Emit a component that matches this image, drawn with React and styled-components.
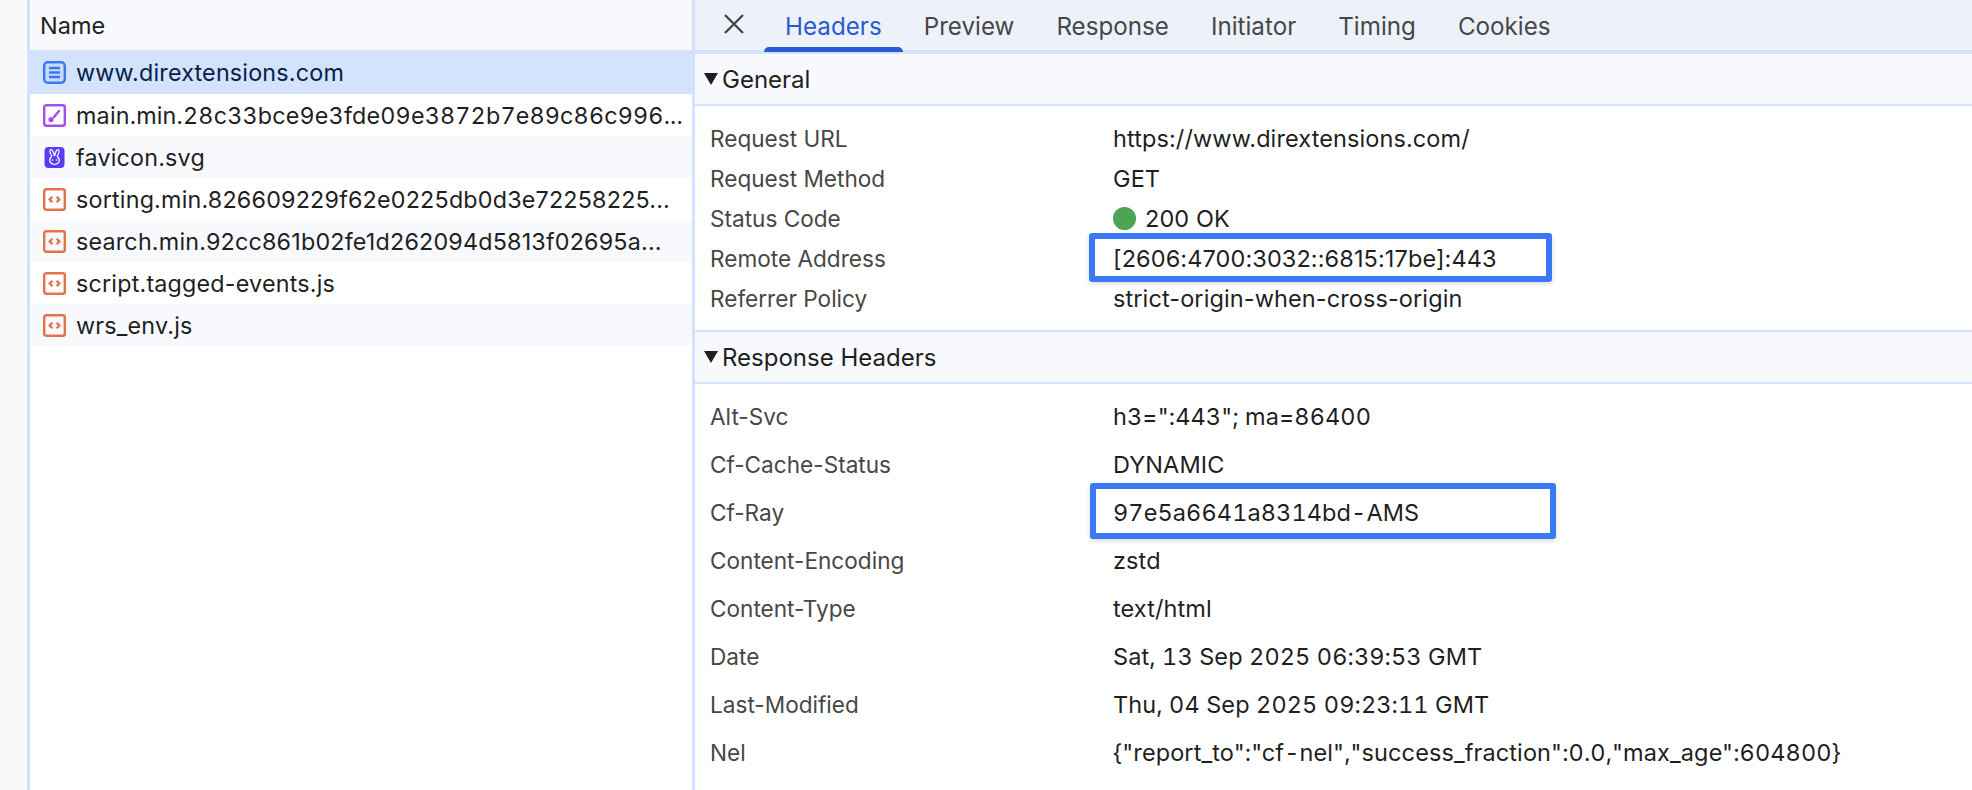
import React from 'react';
import styled, { createGlobalStyle } from 'styled-components';

const GlobalStyle = createGlobalStyle`
    html, body {
        margin: 0;
        padding: 0;
        background: #fff;
        overflow: hidden;
    }
    body {
        font-family: Inter, "Liberation Sans", sans-serif;
        -webkit-font-smoothing: antialiased;
    }
`;

const Page = styled.div`
    display: flex;
    width: 1972px;
    height: 790px;
    overflow: hidden;
`;

const Gutter = styled.div`
    width: 27px;
    flex: none;
    background: #f9f9fb;
    border-right: 3px solid #d3e3fd;
`;

const NamePanel = styled.div`
    width: 662px;
    flex: none;
`;

const NameHeader = styled.div`
    height: 50px;
    display: flex;
    align-items: center;
    padding-left: 8px;
    margin-left: 2px;
    background: #f8f9fd;
    font-size: 23.5px;
    color: #1f1f1f;
`;

const FileRow = styled.div`
    height: ${p => (p.$selected ? 44 : 42)}px;
    display: flex;
    align-items: center;
    padding-left: 13px;
    gap: 10px;
    font-size: 23.3px;
    letter-spacing: 0.2px;
    font-variant-numeric: ${p => (p.$tabular ? 'tabular-nums' : 'normal')};
    white-space: nowrap;
    background: ${p => (p.$selected ? '#d3e3fd' : p.$alt ? '#f8f9fd' : '#fff')};
    color: ${p => (p.$selected ? '#041e49' : '#1f1f1f')};
`;

const Details = styled.div`
    flex: 1;
    min-width: 0;
    border-left: 3px solid #d3e3fd;
`;

const TabBar = styled.div`
    height: 50px;
    display: flex;
    align-items: center;
    background: #edf2fa;
    border-bottom: 4px solid #d3e3fd;
`;

const CloseButton = styled.div`
    width: 69px;
    display: flex;
    justify-content: flex-end;
    padding-right: 20px;
    box-sizing: border-box;
    margin-top: -2px;
`;

const Tab = styled.div`
    position: relative;
    height: 50px;
    display: flex;
    align-items: center;
    padding: 2px 21px 0;
    box-sizing: border-box;
    font-size: 24.2px;
    color: ${p => (p.$active ? '#2a5bd0' : '#474747')};
    ${p => p.$active && `
        &::after {
            content: '';
            position: absolute;
            left: 0;
            right: 0;
            bottom: -2px;
            height: 5px;
            border-radius: 5px 5px 0 0;
            background: #2a5bd0;
        }
    `}
`;

const SectionHeader = styled.div`
    height: 50px;
    display: flex;
    align-items: center;
    gap: 4px;
    padding-left: 9px;
    background: #f8f9fd;
    border-bottom: 2px solid #d3e3fd;
    font-size: 24px;
    color: #1f1f1f;
`;

const Caret = styled.span`
    width: 0;
    height: 0;
    border-left: 7px solid transparent;
    border-right: 7px solid transparent;
    border-top: 12px solid #1f1f1f;
`;

const GeneralList = styled.div`
    height: 226px;
    padding-top: 12px;
    box-sizing: border-box;
    border-bottom: 2px solid #d3e3fd;
`;

const ResponseList = styled.div`
    padding-top: 8px;
`;

const HeaderRow = styled.div`
    display: grid;
    grid-template-columns: 403px 1fr;
    align-items: center;
    height: ${p => p.$h}px;
    padding-left: 15px;
`;

const HeaderName = styled.div`
    color: #474747;
    font-size: 22.6px;
`;

const HeaderValue = styled.div`
    position: relative;
    display: flex;
    align-items: center;
    gap: 9px;
    height: 28px;
    color: #1f1f1f;
    white-space: nowrap;
    font-size: 23.5px;
    letter-spacing: 0.1px;
    font-variant-numeric: ${p => (p.$tabular ? 'tabular-nums' : 'normal')};
`;

const StatusDot = styled.span`
    width: 23px;
    height: 23px;
    border-radius: 50%;
    background: #4ea354;
`;

// blue annotation boxes drawn over the screenshot
const Callout = styled.div`
    position: absolute;
    left: ${p => p.$left}px;
    top: ${p => p.$top}px;
    width: ${p => p.$w}px;
    height: ${p => p.$h}px;
    box-sizing: border-box;
    border: 6px solid #3b78f5;
    border-radius: 3px;
    box-shadow: 0 2px 5px rgba(0, 0, 0, 0.15);
`;

function DocIcon() {
    return (
        <svg width="23" height="23" viewBox="0 0 23 23">
            <rect x="1.200" y="1.200" width="20.600" height="20.600" rx="3.500" fill="#c9dbfb" stroke="#3b78f0" strokeWidth="2.400" />
            <path d="M6 7h11M6 11.500h11M6 16h11" stroke="#3b78f0" strokeWidth="2.400" />
        </svg>
    );
}

function StyleIcon() {
    return (
        <svg width="23" height="23" viewBox="0 0 23 23">
            <rect x="1.200" y="1.200" width="20.600" height="20.600" rx="2" fill="none" stroke="#a350e8" strokeWidth="2.400" />
            <path d="M11 13L16 7" stroke="#a350e8" strokeWidth="2.400" strokeLinecap="round" />
            <circle cx="8" cy="15.600" r="2.600" fill="#a350e8" />
        </svg>
    );
}

function RabbitIcon() {
    return (
        <svg width="23" height="23" viewBox="0 0 23 23">
            <rect x="1.500" y="1" width="20" height="21" rx="4" fill="#5b3df0" />
            <path d="M9 10.500C6.500 7 6.500 3.500 8 3.500S11 7 11.300 10M14 10.500c2.500-3.500 2.500-7 1-7S12 7 11.700 10M8.800 10.500c-3 2-3.300 7 2.700 8 6-1 5.700-6 2.700-8" fill="none" stroke="#fff" strokeWidth="1.200" />
            <circle cx="9.500" cy="14" r=".8" fill="#fff" />
            <circle cx="13.500" cy="14" r=".8" fill="#fff" />
        </svg>
    );
}

function ScriptIcon() {
    return (
        <svg width="23" height="23" viewBox="0 0 23 23">
            <rect x="1.200" y="1.200" width="20.600" height="20.600" rx="2" fill="none" stroke="#e5734a" strokeWidth="2.400" />
            <path d="M9.300 8.700l-2.600 2.800 2.600 2.800M13.700 8.700l2.600 2.800-2.600 2.800" fill="none" stroke="#e5734a" strokeWidth="2.400" />
        </svg>
    );
}

const files = [
    { name: 'www.dirextensions.com', icon: <DocIcon />, selected: true },
    { name: 'main.min.28c33bce9e3fde09e3872b7e89c86c996...', icon: <StyleIcon />, tabular: true },
    { name: 'favicon.svg', icon: <RabbitIcon />, alt: true },
    { name: 'sorting.min.826609229f62e0225db0d3e72258225...', icon: <ScriptIcon /> },
    { name: 'search.min.92cc861b02fe1d262094d5813f02695a...', icon: <ScriptIcon />, alt: true },
    { name: 'script.tagged-events.js', icon: <ScriptIcon /> },
    { name: 'wrs_env.js', icon: <ScriptIcon />, alt: true },
];

const tabs = ['Headers', 'Preview', 'Response', 'Initiator', 'Timing', 'Cookies'];

const responseHeaders = [
    ['Alt-Svc', 'h3=":443"; ma=86400'],
    ['Cf-Cache-Status', 'DYNAMIC'],
    ['Cf-Ray', '97e5a6641a8314bd-AMS', true],
    ['Content-Encoding', 'zstd'],
    ['Content-Type', 'text/html'],
    ['Date', 'Sat, 13 Sep 2025 06:39:53 GMT'],
    ['Last-Modified', 'Thu, 04 Sep 2025 09:23:11 GMT'],
    ['Nel', '{"report_to":"cf-nel","success_fraction":0.0,"max_age":604800}'],
];

export default function App() {
    return (
        <>
            <GlobalStyle />
            <Page>
                <Gutter />
                <NamePanel>
                    <NameHeader>Name</NameHeader>
                    {files.map(f => (
                        <FileRow key={f.name} $selected={f.selected} $alt={f.alt} $tabular={f.tabular}>
                            {f.icon}
                            <span>{f.name}</span>
                        </FileRow>
                    ))}
                </NamePanel>
                <Details>
                    <TabBar>
                        <CloseButton>
                            <svg width="20" height="20" viewBox="0 0 20 20">
                                <path d="M1 1l18 18M19 1L1 19" stroke="#474747" strokeWidth="2.400" />
                            </svg>
                        </CloseButton>
                        {tabs.map((t, i) => (
                            <Tab key={t} $active={i === 0}>{t}</Tab>
                        ))}
                    </TabBar>
                    <SectionHeader><Caret />General</SectionHeader>
                    <GeneralList>
                        <HeaderRow $h={40}>
                            <HeaderName>Request URL</HeaderName>
                            <HeaderValue>https://www.dirextensions.com/</HeaderValue>
                        </HeaderRow>
                        <HeaderRow $h={40}>
                            <HeaderName>Request Method</HeaderName>
                            <HeaderValue>GET</HeaderValue>
                        </HeaderRow>
                        <HeaderRow $h={40}>
                            <HeaderName>Status Code</HeaderName>
                            <HeaderValue><StatusDot />200 OK</HeaderValue>
                        </HeaderRow>
                        <HeaderRow $h={40}>
                            <HeaderName>Remote Address</HeaderName>
                            <HeaderValue>
                                [2606:4700:3032::6815:17be]:443
                                <Callout $left={-24} $top={-11} $w={463} $h={49} />
                            </HeaderValue>
                        </HeaderRow>
                        <HeaderRow $h={40}>
                            <HeaderName>Referrer Policy</HeaderName>
                            <HeaderValue>strict-origin-when-cross-origin</HeaderValue>
                        </HeaderRow>
                    </GeneralList>
                    <SectionHeader><Caret />Response Headers</SectionHeader>
                    <ResponseList>
                        {responseHeaders.map(([k, v, boxed]) => (
                            <HeaderRow key={k} $h={48}>
                                <HeaderName>{k}</HeaderName>
                                <HeaderValue $tabular={/\d{2}/.test(v)}>
                                    {v}
                                    {boxed && <Callout $left={-23} $top={-15} $w={466} $h={56} />}
                                </HeaderValue>
                            </HeaderRow>
                        ))}
                    </ResponseList>
                </Details>
            </Page>
        </>
    );
}
